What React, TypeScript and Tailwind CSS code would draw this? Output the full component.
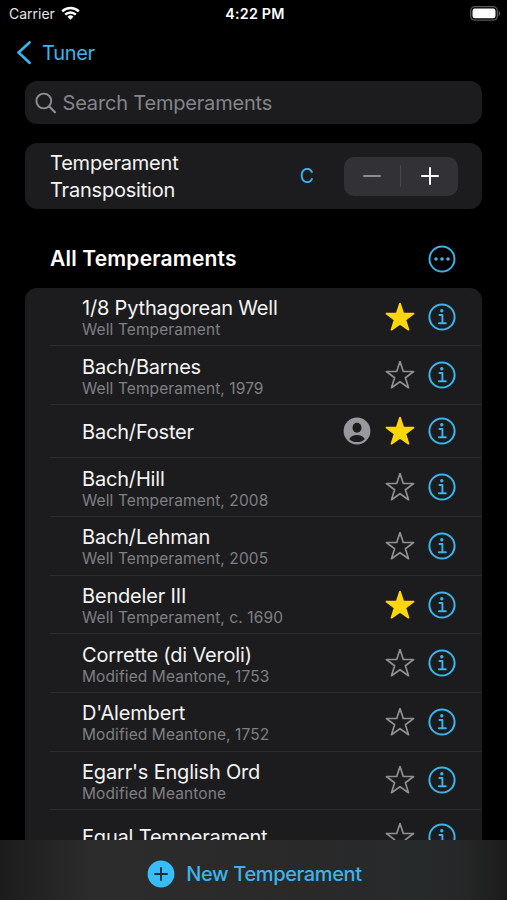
import { clsx } from 'clsx';

type Temperament = {
  name: string;
  detail?: string;
  favorite?: boolean;
  custom?: boolean;
};

const temperaments: Temperament[] = [
  { name: '1/8 Pythagorean Well', detail: 'Well Temperament', favorite: true },
  { name: 'Bach/Barnes', detail: 'Well Temperament, 1979' },
  { name: 'Bach/Foster', favorite: true, custom: true },
  { name: 'Bach/Hill', detail: 'Well Temperament, 2008' },
  { name: 'Bach/Lehman', detail: 'Well Temperament, 2005' },
  { name: 'Bendeler III', detail: 'Well Temperament, c. 1690', favorite: true },
  { name: 'Corrette (di Veroli)', detail: 'Modified Meantone, 1753' },
  { name: "D'Alembert", detail: 'Modified Meantone, 1752' },
  { name: "Egarr's English Ord", detail: 'Modified Meantone' },
  { name: 'Equal Temperament' },
];

function StarIcon({ filled }: { filled?: boolean }) {
  return (
    <svg viewBox="0 0 30 30" className="h-[30px] w-[30px]">
      <path
        d="M15 1.5 18.3 11.4 28.6 11.5 20.4 17.7 23.5 27.7 15 21.7 6.5 27.7 9.6 17.7 1.4 11.5 11.7 11.4Z"
        fill={filled ? '#ffd60a' : 'none'}
        stroke={filled ? '#ffd60a' : '#8e8e93'}
        strokeWidth="1.7"
        strokeLinejoin="round"
      />
    </svg>
  );
}

function InfoIcon() {
  return (
    <svg viewBox="0 0 28 28" className="h-7 w-7" fill="none" stroke="#3cb4ea">
      <circle cx="14" cy="14" r="12.6" strokeWidth="2" />
      <circle cx="13.8" cy="7.7" r="1.7" fill="#3cb4ea" stroke="none" />
      <path d="M11.4 12h3v8.2M10.9 20.3h6.9" strokeWidth="1.9" strokeLinecap="round" strokeLinejoin="round" />
    </svg>
  );
}

function PersonIcon() {
  return (
    <svg viewBox="0 0 28 28" className="h-7 w-7">
      <circle cx="14" cy="14" r="13.4" fill="#98989e" />
      <ellipse cx="14" cy="10.8" rx="4.5" ry="5" fill="#1c1c1e" />
      <path d="M6.3 22.2c1.2-2.7 4.2-4.1 7.7-4.1s6.5 1.4 7.7 4.1c-2.1 1.9-4.7 2.9-7.7 2.9s-5.6-1-7.7-2.9Z" fill="#1c1c1e" />
    </svg>
  );
}

function StatusBar() {
  return (
    <header className="grid h-7 grid-cols-3 items-center pl-[9px] pr-[6px]">
      <div className="flex items-center gap-[6px]">
        <span className="pb-px text-[14px] text-[#e4e4e4]">Carrier</span>
        <svg viewBox="0 0 20 15" className="mb-[2px] h-[15px] w-[19px]" fill="none" stroke="#fff" strokeWidth="2.6">
          <path d="M1.3 5.2a12.5 12.5 0 0 1 17.4 0" />
          <path d="M4.4 8.7a8 8 0 0 1 11.2 0" />
          <path d="M10 14 6.9 10.9a4.4 4.4 0 0 1 6.2 0Z" fill="#fff" stroke="none" />
        </svg>
      </div>
      <span className="text-center text-[14.3px] font-semibold tracking-[0.2px]">4:22 PM</span>
      <svg viewBox="0 0 31 15" className="mb-[2px] h-[15px] w-[31px] justify-self-end">
        <rect x="0.7" y="0.7" width="26.6" height="13.4" rx="4" fill="none" stroke="#59595b" strokeWidth="1.3" />
        <rect x="2.5" y="2.5" width="23" height="9.8" rx="2.3" fill="#fff" />
        <path d="M28.7 5v5c1-.4 1.6-1.4 1.6-2.5S29.7 5.4 28.7 5Z" fill="#59595b" />
      </svg>
    </header>
  );
}

function TemperamentRow({ item, last }: { item: Temperament; last: boolean }) {
  return (
    <li
      className={clsx(
        'ml-[25px] flex items-center pl-8 pr-[26px]',
        item.detail ? 'h-[58.65px]' : 'h-[53.5px]',
        !last && 'border-b border-[#2b2b2d]'
      )}
    >
      <div className={clsx('flex-1 whitespace-nowrap', !last && 'pt-[2px]')}>
        <p className="text-[20px] leading-[24px] tracking-[-0.18px] text-[#f4f4f4]">{item.name}</p>
        {item.detail && (
          <p className="text-[15.5px] leading-[19px] tracking-[0.1px] text-[#7f7f84]">{item.detail}</p>
        )}
      </div>
      {item.custom && (
        <span className="mr-[14px]">
          <PersonIcon />
        </span>
      )}
      <div className="flex items-center gap-[13.5px]">
        <StarIcon filled={item.favorite} />
        <InfoIcon />
      </div>
    </li>
  );
}

export default function App() {
  return (
    <div className="flex h-[900px] w-[507px] flex-col overflow-hidden bg-black font-['Inter',sans-serif] text-white">
      <StatusBar />

      <nav className="flex h-[53px] items-center pb-[4px] pl-4">
        <button className="flex items-center gap-[10px] text-[20px] tracking-[-0.3px] text-[#3cb4ea]">
          <svg viewBox="0 0 16 24" className="h-6 w-4" fill="none" stroke="#3cb4ea" strokeWidth="2.7">
            <path d="M13.5 1.4 2.5 11.6l11 10.2" strokeLinecap="round" strokeLinejoin="round" />
          </svg>
          Tuner
        </button>
      </nav>

      <main className="flex min-h-0 flex-1 flex-col overflow-hidden px-[25px]">
        {/* Search */}
        <div className="flex h-[43px] shrink-0 items-center gap-[6px] rounded-[12px] bg-[#1c1c1e] pl-[9.5px]">
          <svg viewBox="0 0 22 22" className="h-[22px] w-[22px]" fill="none" stroke="#8e8e93" strokeWidth="1.9">
            <circle cx="8.8" cy="9" r="7.4" />
            <path d="m14.3 14.5 5.7 5.7" strokeWidth="2.2" strokeLinecap="round" />
          </svg>
          <span className="text-[20px] tracking-[-0.18px] text-[#848489]">Search Temperaments</span>
        </div>

        {/* Transposition */}
        <section className="mt-[19px] flex h-[66px] shrink-0 items-center rounded-[12px] bg-[#1c1c1e] pl-[25px] pr-6">
          <p className="w-[160px] pt-px text-[20px] leading-[26.5px] tracking-[-0.2px] text-[#f4f4f4]">
            Temperament Transposition
          </p>
          <span className="ml-auto mr-[29.5px] pt-px text-[19.5px] text-[#3cb4ea]">C</span>
          <div className="flex h-[39px] w-[114.5px] items-center rounded-[10px] bg-[#323236]">
            <button className="flex flex-1 justify-center">
              <svg viewBox="0 0 18 18" className="h-[18px] w-[18px]" stroke="#8e8e93" strokeWidth="1.8">
                <path d="M1 9h16" strokeLinecap="round" />
              </svg>
            </button>
            <span className="h-[22px] w-px bg-[#48484c]" />
            <button className="flex flex-1 justify-center">
              <svg viewBox="0 0 18 18" className="h-[18px] w-[18px]" stroke="#fff" strokeWidth="2">
                <path d="M1 9h16M9 1v16" strokeLinecap="round" />
              </svg>
            </button>
          </div>
        </section>

        <div className="flex h-[78.7px] shrink-0 items-center justify-between pl-[25px] pr-[26px] pt-[22px]">
          <h2 className="pb-[2px] text-[21px] font-semibold tracking-[0.18px]">All Temperaments</h2>
          <svg viewBox="0 0 28 28" className="h-7 w-7" fill="#3cb4ea">
            <circle cx="14" cy="14" r="12.5" fill="none" stroke="#3cb4ea" strokeWidth="1.9" />
            <circle cx="8" cy="14" r="1.8" />
            <circle cx="14" cy="14" r="1.8" />
            <circle cx="20" cy="14" r="1.8" />
          </svg>
        </div>

        <ul className="shrink-0 rounded-t-[12px] bg-[#1c1c1e]">
          {temperaments.map((item, i) => (
            <TemperamentRow key={item.name} item={item} last={i === temperaments.length - 1} />
          ))}
        </ul>
      </main>

      {/* Toolbar */}
      <footer className="flex h-[60px] shrink-0 items-center justify-center bg-[linear-gradient(90deg,#1c1c1c_0%,#222_7%,#2c2c2c_18%,#292929_60%,#272a2b_82%,#252727_92%,#1b1b1b_100%)] pl-[2px] pt-[7px]">
        <button className="flex items-center gap-[11px] text-[20px] font-medium tracking-[-0.37px] text-[#3cb4ea]">
          <svg viewBox="0 0 28 28" className="h-7 w-7">
            <circle cx="14" cy="14" r="13.4" fill="#38bdfb" />
            <path d="M8 14h12M14 8v12" stroke="#262a2d" strokeWidth="1.9" strokeLinecap="round" />
          </svg>
          New Temperament
        </button>
      </footer>
    </div>
  );
}
